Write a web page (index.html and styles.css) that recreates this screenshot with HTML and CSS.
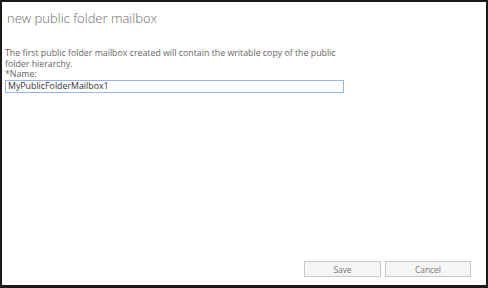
FILE: index.html
```html
<!DOCTYPE html>
<html>
<head>
<meta charset="utf-8">
<link rel="stylesheet" href="styles.css">
</head>
<body>
<div class="frame">
  <div class="dialog">
    <h1 class="title">new public folder mailbox</h1>
    <div class="content">
      <p class="desc">The first public folder mailbox created will contain the writable copy of the public folder hierarchy.</p>
      <label class="label" for="name">*Name:</label>
      <input class="input" id="name" type="text" value="MyPublicFolderMailbox1">
    </div>
    <div class="footer">
      <button class="btn btn-save">Save</button>
      <button class="btn btn-cancel">Cancel</button>
    </div>
  </div>
</div>
</body>
</html>
```

FILE: styles.css
```css
html, body {
  margin: 0;
  padding: 0;
  width: 488px;
  height: 288px;
  overflow: hidden;
  background: #1a1a1a;
}
.frame {
  box-sizing: border-box;
  width: 488px;
  height: 288px;
  padding: 2px 2px 3px 2px;
  background: #1a1a1a;
}
.dialog {
  box-sizing: border-box;
  height: 100%;
  background: #fff;
  display: flex;
  flex-direction: column;
  font-family: "Open Sans", "Noto Sans", sans-serif;
}
.title {
  margin: 0;
  padding: 7px 0 0 5px;
  font-size: 13px;
  font-weight: 300;
  color: #6a6a6a;
  line-height: 18px;
}
.content {
  padding: 21px 0 0 3px;
  display: flex;
  flex-direction: column;
  align-items: flex-start;
}
.desc {
  margin: 0;
  width: 338px;
  font-size: 8.8px;
  line-height: 10.5px;
  color: #666;
}
.label {
  font-size: 8.8px;
  line-height: 10.5px;
  color: #666;
}
.input {
  box-sizing: border-box;
  width: 339px;
  height: 13px;
  margin: 0;
  padding: 0 2px;
  border: 1px solid #94b4ec;
  font-family: "Open Sans", "Noto Sans", sans-serif;
  font-size: 8.8px;
  line-height: 11px;
  color: #333;
  outline: none;
}
.footer {
  margin-top: auto;
  display: flex;
  justify-content: flex-end;
  gap: 4px;
  padding: 0 15px 8px 0;
}
.btn {
  box-sizing: border-box;
  height: 16px;
  background: #f5f5f5;
  border: 1px solid #c8c8c8;
  font-family: "Open Sans", "Noto Sans", sans-serif;
  font-size: 8.4px;
  color: #777;
  padding: 0;
}
.btn-save { width: 77px; }
.btn-cancel { width: 86px; }
```
